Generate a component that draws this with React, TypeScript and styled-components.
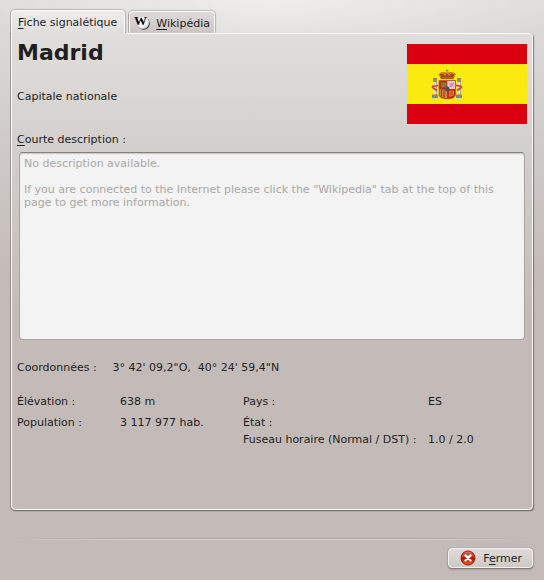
import React, { useState } from 'react';
import styled, { createGlobalStyle } from 'styled-components';

const GlobalStyle = createGlobalStyle`
  *, *::before, *::after { box-sizing: border-box; }
  body {
    margin: 0;
    background: #c4bbb8;
    color: #221e1f;
    font: 11px/17px "DejaVu Sans", Verdana, sans-serif;
  }
  button, textarea { font: inherit; color: inherit; }
`;

const Window = styled.main`
  min-height: 100vh;
  display: flex;
  flex-direction: column;
  padding: 10px 11px 12px;
  background:
    radial-gradient(ellipse 300px 64px at 50% 0, rgba(255, 255, 255, 0.5), rgba(255, 255, 255, 0)),
    linear-gradient(#dedddb 0, #d0cbc9 140px, #c3bbb7 280px);
`;

const TabBar = styled.div`
  display: flex;
  align-items: flex-end;
  gap: 4px;
`;

const Tab = styled.button<{ $active: boolean }>`
  display: flex;
  align-items: center;
  gap: 6px;
  height: ${p => (p.$active ? 24 : 22)}px;
  margin-bottom: ${p => (p.$active ? -1 : 0)}px;
  padding: ${p => (p.$active ? '0 7px 0 6px' : '2px 4px 0')};
  border: 1px solid #fbfbfa;
  border-bottom: 0;
  border-radius: 4px 4px 0 0;
  background: ${p => (p.$active ? 'linear-gradient(#eeedec, #e0dedc)' : 'linear-gradient(#dedad9, #cbc4c2)')};
  box-shadow: 0 -1px 1px rgba(80, 70, 65, 0.25), -1px 0 0 rgba(80, 70, 65, 0.35), 1px 0 1px rgba(80, 70, 65, 0.3);
  clip-path: inset(-3px -3px 0 -3px);
  position: relative;
  z-index: ${p => (p.$active ? 1 : 0)};
  white-space: nowrap;
`;

const Key = styled.span`
  text-decoration: underline;
  text-decoration-thickness: 1px;
  text-underline-offset: 2px;
  text-decoration-skip-ink: none;
`;

const Panel = styled.section`
  flex: 1;
  display: flex;
  flex-direction: column;
  padding: 10px 5px 8px;
  border: 1px solid #fbfbfa;
  border-radius: 0 4px 4px 4px;
  background: linear-gradient(#e0dedc 0, #d5d1ce 100px, #c3bbb7 280px);
  box-shadow: -1px 0 0 rgba(70, 65, 62, 0.35), 0 1px 1px #777471, 1px 1px 1px rgba(70, 65, 62, 0.6);
`;

const Header = styled.header`
  display: flex;
  justify-content: space-between;
  align-items: flex-start;
`;

const City = styled.h1`
  margin: -4px 0 0;
  font-size: 22px;
  line-height: 26px;
`;

const Role = styled.p`
  margin: 22px 0 0;
`;

const Flag = styled.svg`
  flex: none;
  display: block;
  width: 120px;
  height: 80px;
`;

const FieldLabel = styled.label`
  margin-top: 7px;
`;

const Description = styled.textarea`
  height: 188px;
  margin: 4px 2px 0;
  padding: 4px;
  border: 1px solid #aaa5a2;
  border-top-color: #85817f;
  border-radius: 4px;
  outline: 0;
  resize: none;
  background: #f3f3f3;
  box-shadow: inset 0 1px 1px #c8c6c5;
  color: #aaa8a7;
  line-height: 13px;
`;

const Coordinates = styled.dl`
  display: flex;
  gap: 16px;
  margin: 19px 0 17px;
`;

const Facts = styled.div`
  display: grid;
  grid-template-columns: 226fr 284fr;
`;

const FactList = styled.dl<{ $columns: string }>`
  display: grid;
  grid-template-columns: ${p => p.$columns};
  grid-template-rows: 21px;
  margin: 0;
  white-space: nowrap;
`;

const Term = styled.dt``;

const Value = styled.dd`
  margin: 0;
`;

const Separator = styled.hr`
  width: 100%;
  height: 2px;
  margin: 28px 0 8px;
  border: 0;
  background:
    linear-gradient(90deg, transparent, #aaa39f 25%, #aaa39f 75%, transparent) top / 100% 1px no-repeat,
    linear-gradient(90deg, transparent, #dcd7d4 25%, #dcd7d4 75%, transparent) bottom / 100% 1px no-repeat;
`;

const Footer = styled.footer`
  display: flex;
  justify-content: flex-end;
`;

const CloseButton = styled.button`
  display: flex;
  align-items: center;
  gap: 7px;
  height: 20px;
  padding: 0 10px 0 11px;
  border: 1px solid #f2f0ef;
  border-radius: 4px;
  background: linear-gradient(#dfdcda, #cdc9c5);
  box-shadow: 0 1px 2px #6f6a67, 0 0 1px #8a8582;
`;

const Icon = styled.svg`
  flex: none;
  display: block;
  width: 16px;
  height: 16px;
  overflow: visible;
`;

const WikipediaIcon = () => (
  <Icon viewBox="0 0 16 16" aria-hidden="true">
    <defs>
      <radialGradient id="globe" cx="42%" cy="40%" r="60%">
        <stop offset="0.5" stopColor="#fff" />
        <stop offset="0.85" stopColor="#e2e2e2" />
        <stop offset="1" stopColor="#999" />
      </radialGradient>
    </defs>
    <circle cx="9.600" cy="7.600" r="6.200" fill="#333" />
    <circle cx="9" cy="7" r="6.200" fill="url(#globe)" />
    <text x="0" y="9" fontFamily="Liberation Serif, serif" fontWeight="700" fontSize="13" fill="#000">W</text>
  </Icon>
);

const CloseIcon = () => (
  <Icon viewBox="0 0 16 16" aria-hidden="true">
    <defs>
      <linearGradient id="red" x2="0" y2="1">
        <stop stopColor="#dd7765" />
        <stop offset="0.45" stopColor="#c22a18" />
        <stop offset="0.5" stopColor="#b00b00" />
        <stop offset="1" stopColor="#ef6500" />
      </linearGradient>
    </defs>
    <circle cx="8" cy="8" r="7" fill="url(#red)" stroke="#a3150c" />
    <path d="M5.500 5.500l5 5M10.500 5.500l-5 5" stroke="#fff" strokeWidth="2.400" strokeLinecap="round" />
  </Icon>
);

const Pillar = ({ x }: { x: number }) => (
  <g transform={`translate(${x} 0)`}>
    <path d="M0 34h4v2H0z" fill="#8d8c65" />
    <path d="M0 36h4v2H0z" fill="#b08c3c" />
    <path d="M0 38h4v13H0z" fill="#dedbc8" />
    <path d="M3 38h1v13H3z" fill="#b5b3a0" />
    <path d="M-1 50.500h6V52h-6z" fill="#a58435" />
    <path d="M-1 52h6v2h-6z" fill="#6e9293" />
    <path d="M-1 54h6v1h-6z" fill="#d9d9a8" />
  </g>
);

const SpanishFlag = () => (
  <Flag viewBox="0 0 120 80" role="img" aria-label="Espagne">
    <path d="M0 0h120v80H0z" fill="#db000f" />
    <path d="M0 20h120v40H0z" fill="#fbea10" />
    <Pillar x={26} />
    <Pillar x={50} />
    <path d="M25 42.500l6-1M25 43l5 3.500M55 42.500l-6-1M55 43l-5 3.500" fill="none" stroke="#cc3d2f" strokeWidth="1.600" />
    <path d="M32 36.500h16.500V50c0 3.500-3 4.800-8.200 4.800S32 53.500 32 50z" fill="#b32d23" stroke="#a5482c" strokeWidth=".6" />
    <path d="M40.300 37H48v8h-7.700z" fill="#e6cad0" />
    <path d="M42 43.500l1-2.500-1-1 3-1 2-1-1 3 1 2.500-2-1z" fill="#dc8ba5" />
    <path d="M34 43.500V38h1v1h1v-1h1.500v1h1v-1h1v5.500z" fill="#8c7431" />
    <path d="M32.500 45.500h7.800V54c-4-.2-7.800-1-7.800-4.500z" fill="#c98a3a" />
    <path d="M34.500 46v6.500M37 46v7.500" stroke="#b12b20" />
    <path d="M40.300 45.500H48V50c0 3.500-3.700 4-7.700 4z" fill="#c52619" />
    <path d="M42.500 47h4v4l-4 1.500z" fill="#cf5e25" stroke="#d39a36" strokeWidth=".7" />
    <circle cx="40.200" cy="45" r="2.200" fill="#315275" stroke="#a9342c" strokeWidth=".5" />
    <path d="M33.500 34L32 30.500c1.500-2.500 5-2.700 8-1.500 3-1.200 7-1 8.500 1.500L46.700 34z" fill="#bd3f1c" />
    <path d="M33.500 33L32 30.500c2-2.500 5-2 6 .5l2-2.500 2 2.500c1-2.500 4-3 6-.5L46.700 33" fill="none" stroke="#c29a25" strokeWidth="1.100" />
    <path d="M33.500 33.300h13.200v1.900H33.500z" fill="#a5691f" />
    <path d="M40 25.500v3M38.700 26.700h2.700" stroke="#a58e28" strokeWidth="1.100" />
  </Flag>
);

export default function App() {
  const [tab, setTab] = useState('fiche');
  return (
    <>
      <GlobalStyle />
      <Window>
        <TabBar role="tablist">
          <Tab role="tab" aria-selected={tab === 'fiche'} $active={tab === 'fiche'} onClick={() => setTab('fiche')}>
            <span><Key>F</Key>iche signalétique</span>
          </Tab>
          <Tab role="tab" aria-selected={tab === 'wiki'} $active={tab === 'wiki'} onClick={() => setTab('wiki')}>
            <WikipediaIcon />
            <span><Key>W</Key>ikipédia</span>
          </Tab>
        </TabBar>
        <Panel role="tabpanel">
          <Header>
            <div>
              <City>Madrid</City>
              <Role>Capitale nationale</Role>
            </div>
            <SpanishFlag />
          </Header>
          <FieldLabel htmlFor="description"><Key>C</Key>ourte description :</FieldLabel>
          <Description
            id="description"
            readOnly
            value={'No description available.\n\nIf you are connected to the Internet please click the "Wikipedia" tab at the top of this page to get more information.'}
          />
          <Coordinates>
            <Term>Coordonnées :</Term>
            <Value>3° 42' 09,2"O,&nbsp; 40° 24' 59,4"N</Value>
          </Coordinates>
          <Facts>
            <FactList $columns="103fr 123fr">
              <Term>Élévation :</Term>
              <Value>638 m</Value>
              <Term>Population :</Term>
              <Value>3 117 977 hab.</Value>
            </FactList>
            <FactList $columns="185fr 99fr">
              <Term>Pays :</Term>
              <Value>ES</Value>
              <Term>État :</Term>
              <Value />
              <Term>Fuseau horaire (Normal / DST) :</Term>
              <Value>1.0 / 2.0</Value>
            </FactList>
          </Facts>
        </Panel>
        <Separator />
        <Footer>
          <CloseButton type="button">
            <CloseIcon />
            <span>F<Key>e</Key>rmer</span>
          </CloseButton>
        </Footer>
      </Window>
    </>
  );
}
